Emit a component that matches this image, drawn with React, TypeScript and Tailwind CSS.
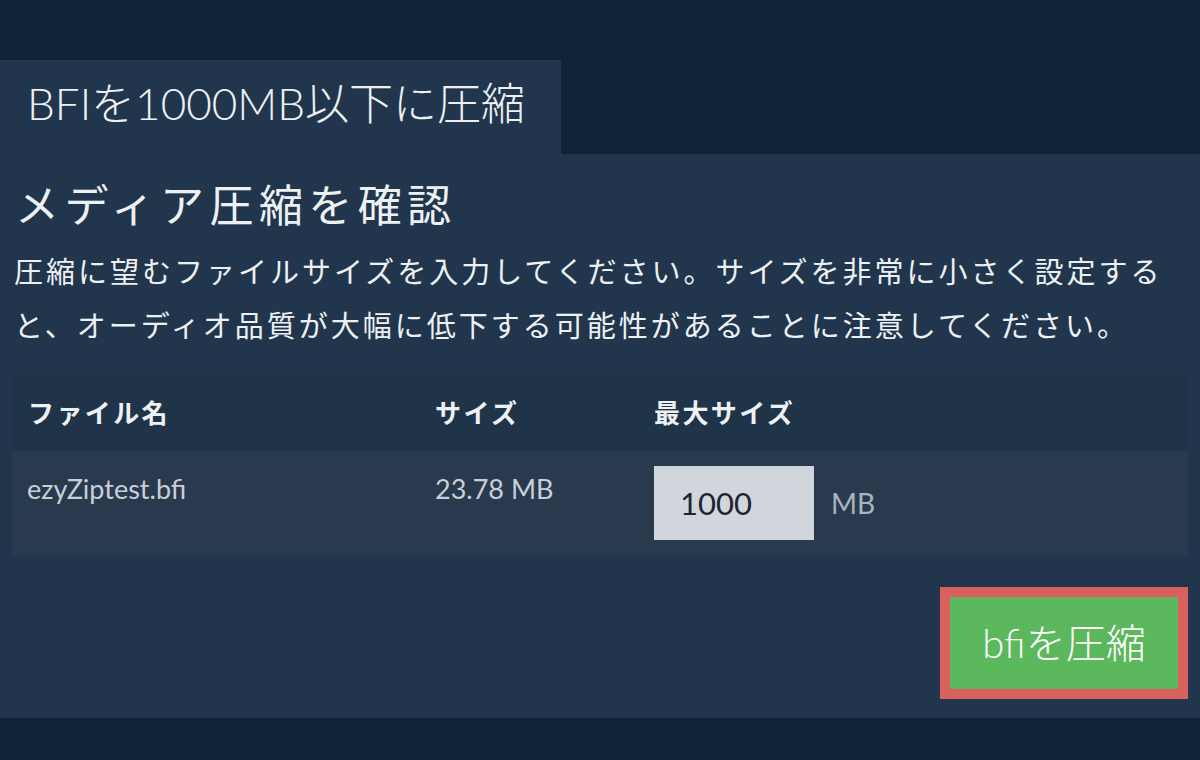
const font = "font-['Lato','Noto_Sans_CJK_JP',sans-serif]";

export default function App() {
  return (
    <div className={`w-[1200px] h-[760px] bg-[#0f2439] pt-[60px] ${font}`}>
      {/* Tab */}
      <div className="w-[561px] h-[94px] bg-[#21364d] flex items-center pl-[27px] pb-[8px]">
        <h1 className="text-[44px] font-light text-[#eef1f4] leading-none">BFIを1000MB以下に圧縮</h1>
      </div>

      {/* Panel */}
      <div className="h-[564px] bg-[#21364d] px-3 pt-[22px]">
        <h2 className="text-[44px] leading-[58px] text-[#eef1f4] pl-[3px] tracking-[5.4px]">メディア圧縮を確認</h2>
        <p className="mt-[11px] pl-[2px] text-[29px] leading-[54px] tracking-[3px] text-[#eef1f4]">
          圧縮に望むファイルサイズを入力してください。サイズを非常に小さく設定すると、オーディオ品質が大幅に低下する可能性があることに注意してください。
        </p>

        {/* Table */}
        <div className="mt-[23px]">
          <div className="h-[75px] bg-[#1f3449] flex items-center text-[26px] tracking-[2.4px] font-bold text-[#eef1f4]">
            <div className="w-[407px] pl-4">ファイル名</div>
            <div className="w-[219px] pl-4">サイズ</div>
            <div className="pl-4">最大サイズ</div>
          </div>
          <div className="h-[104px] bg-[#2a3a4e] flex items-start text-[27px] text-[#c9cfd6]">
            <div className="w-[407px] pl-[15px] pt-[21px] leading-[34px]">ezyZiptest.bfi</div>
            <div className="w-[219px] pl-4 pt-[21px] leading-[34px]">23.78 MB</div>
            <div className="pl-4 pt-[15px] flex items-center">
              <div className="w-[160px] h-[74px] bg-[#d1d6dc] flex items-center pl-[26px] text-[31px] text-[#1d2530]">
                1000
              </div>
              <span className="ml-[17px] text-[28px] text-[#aab4bf]">MB</span>
            </div>
          </div>
        </div>

        {/* Button */}
        <div className="flex justify-end mt-[32px]">
          <button className="w-[248px] h-[112px] border-[10px] border-[#d9605c] bg-[#5cb85c] text-white text-[40px] font-light flex items-center justify-center">
            bfiを圧縮
          </button>
        </div>
      </div>
    </div>
  );
}
